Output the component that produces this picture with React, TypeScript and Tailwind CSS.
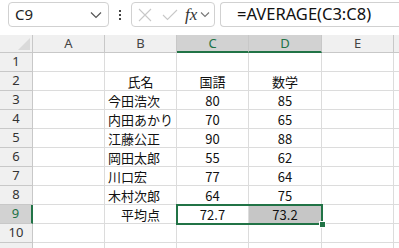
import React from "react";

const colWidths = [72, 72, 72, 73, 72];
const colLetters = ["A", "B", "C", "D", "E"];

type Row = (string | null)[];
const data: Row[] = [
  [null, null, null, null, null],
  [null, "氏名", "国語", "数学", null],
  [null, "今田浩次", "80", "85", null],
  [null, "内田あかり", "70", "65", null],
  [null, "江藤公正", "90", "88", null],
  [null, "岡田太郎", "55", "62", null],
  [null, "川口宏", "77", "64", null],
  [null, "木村次郎", "64", "75", null],
  [null, "平均点", "72.7", "73.2", null],
  [null, null, null, null, null],
  [null, null, null, null, null],
];

const cjk = { fontFamily: '"Noto Sans CJK JP", "Noto Sans", sans-serif' };
const ui = { fontFamily: '"Noto Sans", "Liberation Sans", sans-serif' };

function Toolbar() {
  return (
    <div className="flex h-[35px] items-start bg-white pt-[2px]">
      <div className="ml-[8px] flex h-[25px] w-[101px] items-center justify-between rounded-[4px] border border-[#d1d1d1] bg-white pl-[6px] pr-[6px]">
        <span className="text-[15px] text-[#222]" style={ui}>C9</span>
        <svg width="12" height="8" viewBox="0 0 12 8">
          <path d="M1 1.5 L6 6.5 L11 1.5" fill="none" stroke="#555" strokeWidth="1.2" />
        </svg>
      </div>
      <div className="flex h-[25px] w-[22px] flex-col items-center justify-center gap-[2px]">
        <div className="h-[2px] w-[2px] bg-[#444]" />
        <div className="h-[2px] w-[2px] bg-[#444]" />
        <div className="h-[2px] w-[2px] bg-[#444]" />
      </div>
      <div className="flex h-[25px] w-[84px] items-center rounded-[4px] border border-[#d1d1d1] bg-white">
        <svg className="ml-[6px]" width="14" height="14" viewBox="0 0 14 14">
          <path d="M1 1 L13 13 M13 1 L1 13" stroke="#c8c8c8" strokeWidth="1.1" />
        </svg>
        <svg className="ml-[10px]" width="16" height="14" viewBox="0 0 16 14">
          <path d="M1 7 L5.5 11.5 L15 2" fill="none" stroke="#c8c8c8" strokeWidth="1.1" />
        </svg>
        <span className="ml-[7px] text-[17px] italic leading-none text-[#333]" style={{ fontFamily: '"Liberation Serif", serif' }}>
          fx
        </span>
        <svg className="ml-[3px]" width="10" height="7" viewBox="0 0 10 7">
          <path d="M1 1.5 L5 5.5 L9 1.5" fill="none" stroke="#777" strokeWidth="1.1" />
        </svg>
      </div>
      <div className="ml-[5px] flex h-[25px] flex-1 items-center rounded-l-[4px] border border-r-0 border-[#d1d1d1] bg-white pl-[16px]">
        <span className="text-[16.5px] text-[#111]" style={ui}>=AVERAGE(C3:C8)</span>
      </div>
    </div>
  );
}

function HeaderRow() {
  return (
    <div className="flex h-[18px]">
      <div className="relative h-[18px] w-[33px] shrink-0 border-b border-r border-[#c8c8c8] bg-[#f0f0f0]">
        <svg className="absolute bottom-[2px] right-[2px]" width="12" height="12" viewBox="0 0 12 12">
          <path d="M12 0 L12 12 L0 12 Z" fill="#dadada" />
        </svg>
      </div>
      {colLetters.map((l, i) => {
        const sel = i === 2 || i === 3;
        return (
          <div
            key={l}
            className={
              sel
                ? "flex h-[18px] shrink-0 items-center justify-center border-b-2 border-r border-b-[#217346] border-r-[#c8c8c8] bg-[#d2d2d2] pt-[2px] text-[13px] text-[#217346]"
                : "flex h-[18px] shrink-0 items-center justify-center border-b border-r border-[#c8c8c8] bg-[#f0f0f0] text-[13px] text-[#444]"
            }
            style={{ width: colWidths[i], ...ui }}
          >
            {l}
          </div>
        );
      })}
      <div className="h-[18px] flex-1 border-b border-[#c8c8c8] bg-[#f0f0f0]" />
    </div>
  );
}

function DataRow({ idx, row }: { idx: number; row: Row }) {
  const sel = idx === 9;
  return (
    <div className="flex h-[19px]">
      <div
        className={
          sel
            ? "flex h-[19px] w-[33px] shrink-0 items-center justify-center border-b border-r-2 border-b-[#c8c8c8] border-r-[#217346] bg-[#d2d2d2] text-[13px] text-[#217346]"
            : "flex h-[19px] w-[33px] shrink-0 items-center justify-center border-b border-r border-[#c8c8c8] bg-[#f0f0f0] text-[13px] text-[#333]"
        }
        style={ui}
      >
        {idx <= 10 ? idx : ""}
      </div>
      {row.map((v, i) => {
        const isName = i === 1 && idx >= 3 && idx <= 8;
        const gray = idx === 9 && i === 3;
        return (
          <div
            key={i}
            className={
              "flex h-[19px] shrink-0 items-center border-b border-r border-[#dcdcdc] pt-[1px] text-[13px] text-[#111] " +
              (isName ? "justify-start pl-[3px] " : "justify-center ") +
              (gray ? "bg-[#c6c6c6]" : "bg-white")
            }
            style={{ width: colWidths[i], ...cjk }}
          >
            {v}
          </div>
        );
      })}
      <div className="h-[19px] flex-1 border-b border-[#dcdcdc] bg-white" />
    </div>
  );
}

export default function App() {
  return (
    <div className="h-[248px] w-[399px] overflow-hidden bg-white">
      <Toolbar />
      <div className="relative">
        <HeaderRow />
        {data.map((r, i) => (
          <DataRow key={i} idx={i + 1} row={r} />
        ))}
        <div className="pointer-events-none absolute left-[176px] top-[169px] h-[21px] w-[147px] border-2 border-[#217346]" />
        <div className="pointer-events-none absolute left-[319px] top-[186px] h-[7px] w-[7px] border border-white bg-[#217346]" />
      </div>
    </div>
  );
}
